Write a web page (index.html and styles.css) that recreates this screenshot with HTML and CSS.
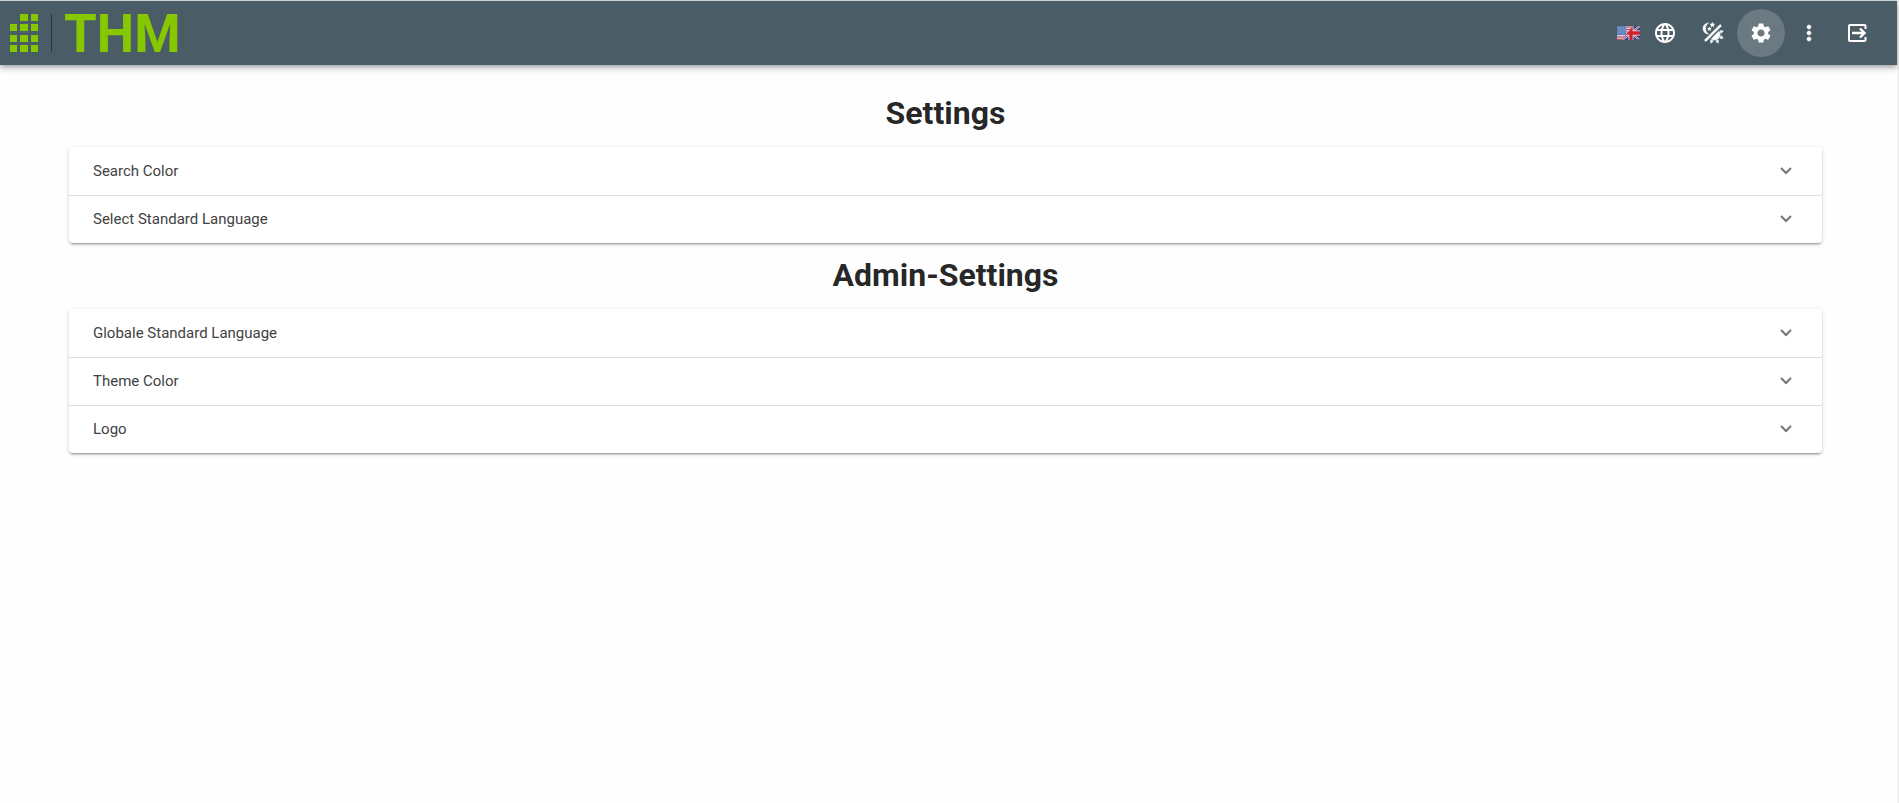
FILE: index.html
```html
<!DOCTYPE html>
<html lang="en">
<head>
<meta charset="utf-8">
<title>Settings</title>
<link rel="stylesheet" href="styles.css">
</head>
<body>
<div class="app">
  <header class="toolbar">
    <a class="brand" href="#" aria-label="THM">
      <svg class="brand-dots" viewBox="0 0 28 38" aria-hidden="true">
        <path fill="#86c700" d="M10 0h8v7h-8zM21 0h7v7h-7zM0 10h7v7H0zM10 10h8v7h-8zM21 10h7v7h-7zM0 21h7v7H0zM10 21h8v7h-8zM21 21h7v7h-7zM0 31h7v7H0zM10 31h8v7h-8zM21 31h7v7h-7z"/>
      </svg>
      <span class="brand-line"></span>
      <span class="brand-name">THM</span>
    </a>
    <nav class="actions">
      <svg class="flag" viewBox="0 0 24 16" role="img" aria-label="English">
        <defs>
          <clipPath id="us"><path d="M0 1h16L5 15H0z"/></clipPath>
          <clipPath id="uk"><path d="M16 1h7v13l-8 1H5z"/></clipPath>
        </defs>
        <g clip-path="url(#us)">
          <path fill="#d9c6d0" d="M0 0h24v16H0z"/>
          <path stroke="#c05060" stroke-width="1.200" d="M0 12h24M0 14.400h24M9 2h11M9 4.500h11M9 7h11"/>
          <path fill="#5f83bd" d="M0 0h9v10H0z"/>
          <path stroke="#91abd6" stroke-width="1" stroke-dasharray="1 1.500" d="M1 3h8M2 5h7M1 7h8"/>
        </g>
        <g clip-path="url(#uk)">
          <path fill="#1f4590" d="M0 0h24v16H0z"/>
          <path stroke="#e9e7ef" stroke-width="2" d="M4 0l20 16M24 0L4 16"/>
          <path stroke="#d3293d" stroke-width="1" d="M4 0l20 16M24 0L4 16"/>
          <path stroke="#e9e7ef" stroke-width="5" d="M14 0v16M0 8h24"/>
          <path stroke="#d3202f" stroke-width="3.400" d="M14 0v16M0 8h24"/>
        </g>
      </svg>
      <button class="icon-button" type="button" aria-label="Language">
        <svg viewBox="0 0 24 24"><path d="M11.990 2C6.470 2 2 6.480 2 12s4.470 10 9.990 10C17.520 22 22 17.520 22 12S17.520 2 11.990 2zm6.930 6h-2.950c-.32-1.250-.78-2.450-1.380-3.560 1.840.63 3.370 1.910 4.330 3.560zM12 4.040c.83 1.200 1.480 2.530 1.910 3.960h-3.820c.43-1.430 1.080-2.760 1.910-3.960zM4.260 14C4.100 13.360 4 12.690 4 12s.1-1.360.26-2h3.380c-.08.66-.14 1.320-.14 2s.06 1.340.14 2H4.260zm.82 2h2.950c.32 1.250.78 2.450 1.380 3.560-1.840-.63-3.370-1.900-4.330-3.560zm2.950-8H5.080c.96-1.660 2.490-2.930 4.330-3.560C8.810 5.550 8.350 6.750 8.030 8zM12 19.960c-.83-1.200-1.480-2.530-1.910-3.960h3.820c-.43 1.430-1.080 2.760-1.910 3.960zM14.340 14H9.660c-.09-.66-.16-1.320-.16-2s.07-1.350.16-2h4.680c.09.65.16 1.320.16 2s-.07 1.340-.16 2zm.25 5.560c.6-1.110 1.060-2.310 1.380-3.560h2.950c-.96 1.650-2.490 2.930-4.330 3.560zM16.360 14c.08-.66.14-1.320.14-2s-.06-1.340-.14-2h3.380c.16.640.26 1.310.26 2s-.1 1.360-.26 2h-3.380z"/></svg>
      </button>
      <button class="icon-button icon-button-bold" type="button" aria-label="Toggle dark mode">
        <svg viewBox="0 0 24 24"><path d="M7.500,2C5.710,3.150 4.500,5.180 4.500,7.500C4.500,9.820 5.710,11.850 7.530,13C4.460,13 2,10.540 2,7.500A5.500,5.500 0 0,1 7.500,2M19.070,3.500L20.500,4.930L4.930,20.500L3.500,19.070L19.070,3.500M12.890,5.930L11.410,5L9.970,6L10.390,4.300L9,3.240L10.750,3.120L11.330,1.470L12,3.100L13.730,3.130L12.380,4.260L12.890,5.930M9.590,9.540L8.430,8.810L7.310,9.590L7.650,8.270L6.560,7.440L7.920,7.350L8.370,6.060L8.880,7.330L10.240,7.360L9.190,8.230L9.590,9.540M19,13.500A5.500,5.500 0 0,1 13.500,19C12.280,19 11.150,18.600 10.240,17.930L17.930,10.240C18.600,11.150 19,12.280 19,13.500M14.600,20.080L17.370,18.930L17.130,22.280L14.600,20.080M18.930,17.380L20.080,14.610L22.280,17.150L18.930,17.380M20.080,12.420L18.940,9.640L22.280,9.880L20.080,12.420M9.630,18.930L12.400,20.080L9.870,22.270L9.630,18.930Z"/></svg>
      </button>
      <button class="icon-button icon-button-active" type="button" aria-label="Settings">
        <svg viewBox="0 0 24 24"><path d="M19.140 12.940c.04-.3.060-.61.060-.94 0-.32-.02-.64-.07-.94l2.030-1.580c.18-.14.230-.41.120-.61l-1.920-3.320c-.12-.22-.37-.29-.59-.22l-2.390.96c-.5-.38-1.030-.7-1.620-.94l-.36-2.540c-.04-.24-.24-.41-.48-.41h-3.840c-.24 0-.43.170-.47.410l-.36 2.540c-.59.240-1.130.57-1.620.94l-2.390-.96c-.22-.08-.47 0-.59.220L2.740 8.870c-.12.210-.08.470.120.610l2.030 1.580c-.05.3-.09.630-.09.940s.02.640.070.940l-2.030 1.580c-.18.140-.23.410-.12.610l1.920 3.320c.12.220.37.290.59.220l2.390-.96c.5.380 1.030.7 1.620.94l.36 2.540c.05.240.24.410.48.410h3.840c.24 0 .44-.17.470-.41l.36-2.540c.59-.24 1.130-.56 1.620-.94l2.390.96c.22.080.47 0 .59-.22l1.920-3.320c.12-.22.070-.47-.12-.61l-2.010-1.580zM12 15.600c-1.980 0-3.600-1.620-3.600-3.600s1.620-3.600 3.600-3.600 3.600 1.620 3.600 3.600-1.620 3.600-3.600 3.600z"/></svg>
      </button>
      <button class="icon-button icon-button-bold" type="button" aria-label="More">
        <svg viewBox="0 0 24 24"><path d="M12 8c1.100 0 2-.9 2-2s-.9-2-2-2-2 .9-2 2 .9 2 2 2zm0 2c-1.100 0-2 .9-2 2s.9 2 2 2 2-.9 2-2-.9-2-2-2zm0 6c-1.100 0-2 .9-2 2s.9 2 2 2 2-.9 2-2-.9-2-2-2z"/></svg>
      </button>
      <button class="icon-button" type="button" aria-label="Log out">
        <svg viewBox="0 0 24 24"><g fill="none" stroke="#fff"><path stroke-width="2" d="M20.500 8V5q0-1-1-1H5Q4 4 4 5v14q0 1 1 1h14.500q1 0 1-1v-3"/><path stroke-width="2.400" d="M7 12h12M15 7.500l4.500 4.500-4.500 4.500"/></g></svg>
      </button>
    </nav>
  </header>
  <main class="content">
    <h1 class="title">Settings</h1>
    <div class="accordion">
      <button class="panel" type="button" aria-expanded="false">Search Color<svg class="chevron" viewBox="0 0 12 8"><path d="M1 1l5 5 5-5"/></svg></button>
      <button class="panel" type="button" aria-expanded="false">Select Standard Language<svg class="chevron" viewBox="0 0 12 8"><path d="M1 1l5 5 5-5"/></svg></button>
    </div>
    <h1 class="title">Admin-Settings</h1>
    <div class="accordion">
      <button class="panel" type="button" aria-expanded="false">Globale Standard Language<svg class="chevron" viewBox="0 0 12 8"><path d="M1 1l5 5 5-5"/></svg></button>
      <button class="panel" type="button" aria-expanded="false">Theme Color<svg class="chevron" viewBox="0 0 12 8"><path d="M1 1l5 5 5-5"/></svg></button>
      <button class="panel" type="button" aria-expanded="false">Logo<svg class="chevron" viewBox="0 0 12 8"><path d="M1 1l5 5 5-5"/></svg></button>
    </div>
  </main>
</div>
</body>
</html>
```
FILE: styles.css
```css
* {
  box-sizing: border-box;
}

body {
  margin: 0;
  font-family: Roboto, "Liberation Sans", sans-serif;
  color: rgba(0, 0, 0, 0.87);
  background: #fefefe;
}

.app {
  min-height: 100vh;
  border-top: 1px solid #dcdfe0;
  border-right: 2px solid #f0f0f0;
}

.toolbar {
  display: flex;
  align-items: center;
  justify-content: space-between;
  height: 64px;
  padding: 0 16px 0 10px;
  background: #4a5c66;
  box-shadow: 0 2px 4px -1px rgba(0, 0, 0, 0.2), 0 4px 5px rgba(0, 0, 0, 0.14), 0 1px 10px rgba(0, 0, 0, 0.12);
}

.brand {
  display: flex;
  align-items: center;
  color: #86c700;
  text-decoration: none;
}

.brand-dots {
  width: 28px;
  height: 38px;
}

.brand-line {
  width: 1px;
  height: 38px;
  margin: 0 12px 0 13px;
  background: #263640;
}

.brand-name {
  padding-top: 2px;
  font-size: 53px;
  font-weight: 700;
  line-height: 62px;
}

.actions {
  display: flex;
  align-items: center;
}

.flag {
  width: 24px;
  height: 16px;
}

.icon-button {
  display: flex;
  align-items: center;
  justify-content: center;
  width: 48px;
  height: 48px;
  padding: 0;
  border: 0;
  border-radius: 50%;
  background: transparent;
}

.icon-button svg {
  width: 24px;
  height: 24px;
  fill: #fff;
}

.icon-button-bold svg {
  stroke: #fff;
  stroke-width: 0.6;
}

.icon-button-active {
  background: #6b7982;
}

.content {
  padding: 24px 75px 24px 69px;
}

.title {
  margin: 0;
  padding: 4px 0 14px;
  font-size: 32px;
  font-weight: 700;
  line-height: 40px;
  text-align: center;
}

.accordion {
  margin-bottom: 8px;
  border-radius: 4px;
  background: #fff;
  box-shadow: 0 3px 1px -2px rgba(0, 0, 0, 0.2), 0 2px 2px rgba(0, 0, 0, 0.14), 0 1px 5px rgba(0, 0, 0, 0.12);
}

.panel {
  display: flex;
  align-items: center;
  justify-content: space-between;
  width: 100%;
  height: 48px;
  padding: 0 30px 0 24px;
  border: 0;
  background: transparent;
  color: #424242;
  font-family: inherit;
  font-size: 15px;
  text-align: left;
}

.panel + .panel {
  box-shadow: inset 0 1px #dedede;
}

.chevron {
  width: 12px;
  height: 8px;
  fill: none;
  stroke: #757575;
  stroke-width: 2;
}
```
